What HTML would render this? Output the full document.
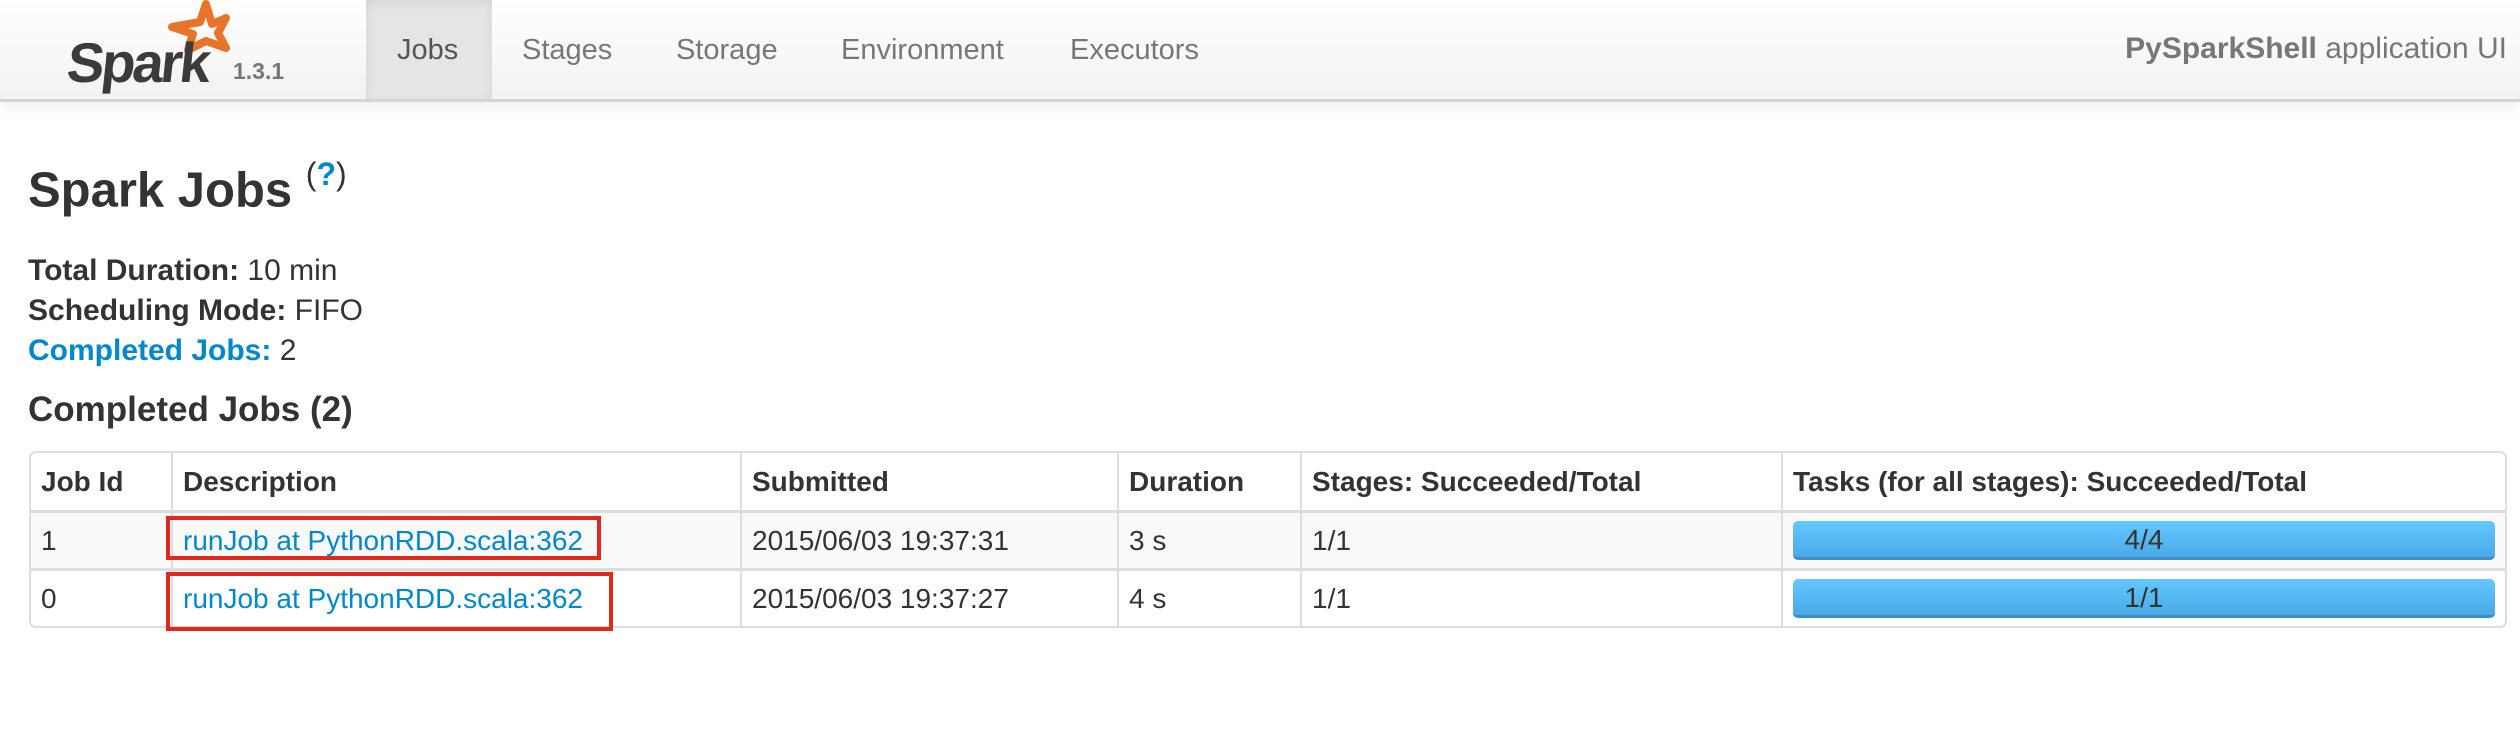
<!DOCTYPE html>
<html><head><meta charset="utf-8">
<style>
*{margin:0;padding:0;box-sizing:border-box}
body{width:2520px;height:734px;background:#fff;font-family:"Liberation Sans",Arial,sans-serif;color:#333;position:relative;overflow:hidden}
.nav{position:absolute;left:0;top:0;width:2520px;height:102px;background:linear-gradient(#ffffff,#f2f2f2);border-bottom:3px solid #d4d4d4;box-shadow:0 6px 14px rgba(0,0,0,0.06)}
.tab{position:absolute;top:0;height:99px;line-height:100px;font-size:29px;color:#777}
.active{background:#e5e5e5;box-shadow:inset 0 4px 10px rgba(0,0,0,0.07);color:#555}
.abs{position:absolute;white-space:nowrap}
.b{font-weight:bold}
.blue{color:#0088cc}
table{position:absolute;left:29px;top:451px;width:2478px;border-collapse:separate;border-spacing:0;border:2px solid #ddd;border-radius:7px;font-size:28px;table-layout:fixed}
td,th{height:58px;padding:0 10px;text-align:left;border-left:2px solid #ddd;border-top:3px solid #ddd;vertical-align:middle;white-space:nowrap;overflow:visible}
th{border-top:none;height:57px;font-size:28px}
tr td:first-child,tr th:first-child{border-left:none}
tr.odd td{background:#f9f9f9}
.bar{height:39px;border-radius:5px;background:linear-gradient(#64c8ff,#4aa9e6);border-bottom:3px solid #3d8fc8;text-align:center;line-height:38px;font-size:28px;color:#333}
.red{position:absolute;border:4px solid #e0281c}
</style></head><body>
<div class="nav">
  <svg class="abs" style="left:66px;top:0" width="170" height="96" viewBox="0 0 170 96">
    <path d="M140 4 L146 24 L160 18 L152 33 L160 48 L140 41 L122 50 L127 34 L106 27 L134 22 Z" fill="none" stroke="#e8742a" stroke-width="8" stroke-linejoin="round"/>
    <text x="8" y="82" font-family="Liberation Sans" font-weight="bold" font-size="56" fill="#3b3b3b" letter-spacing="-3" transform="skewX(-6)">Spark</text>
  </svg>
  <div class="abs b" style="left:233px;top:58px;font-size:23px;color:#777">1.3.1</div>
  <div class="tab active" style="left:366px;width:126px;padding-left:31px">Jobs</div>
  <div class="tab" style="left:522px">Stages</div>
  <div class="tab" style="left:676px">Storage</div>
  <div class="tab" style="left:841px">Environment</div>
  <div class="tab" style="left:1070px">Executors</div>
  <div class="abs" style="right:13px;top:32px;font-size:30px;color:#777"><span class="b">PySparkShell</span> application UI</div>
</div>
<div class="abs b" style="left:28px;top:160px;font-size:49px;color:#333">Spark Jobs <sup style="font-size:32px;font-weight:normal;position:relative;top:-4px">(<span class="blue b">?</span>)</sup></div>
<div class="abs" style="left:28px;top:251px;font-size:30px;line-height:40px">
  <div><span class="b">Total Duration:</span> 10 min</div>
  <div><span class="b">Scheduling Mode:</span> FIFO</div>
  <div><span class="b blue">Completed Jobs:</span> 2</div>
</div>
<div class="abs b" style="left:28px;top:390px;font-size:35px">Completed Jobs (2)</div>
<table>
<colgroup><col style="width:140px"><col style="width:569px"><col style="width:377px"><col style="width:183px"><col style="width:481px"><col></colgroup>
<tr><th>Job Id</th><th>Description</th><th>Submitted</th><th>Duration</th><th>Stages: Succeeded/Total</th><th>Tasks (for all stages): Succeeded/Total</th></tr>
<tr class="odd"><td>1</td><td class="blue">runJob at PythonRDD.scala:362</td><td>2015/06/03 19:37:31</td><td>3 s</td><td>1/1</td><td><div class="bar">4/4</div></td></tr>
<tr><td>0</td><td class="blue">runJob at PythonRDD.scala:362</td><td>2015/06/03 19:37:27</td><td>4 s</td><td>1/1</td><td><div class="bar">1/1</div></td></tr>
</table>
<div class="red" style="left:166px;top:516px;width:435px;height:44px"></div>
<div class="red" style="left:166px;top:572px;width:447px;height:59px"></div>
</body></html>
